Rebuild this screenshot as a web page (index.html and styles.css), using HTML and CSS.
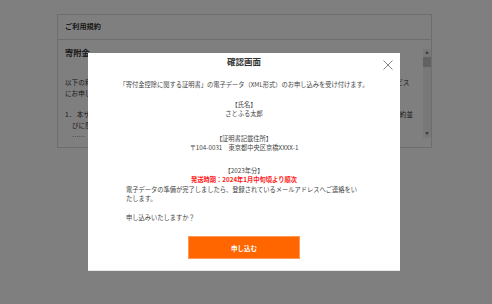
FILE: index.html
```html
<!DOCTYPE html>
<html lang="ja">
<head>
    <meta charset="UTF-8">
    <meta name="viewport" content="width=device-width, initial-scale=1.0">
    <title>確認画面</title>
    <link rel="stylesheet" href="styles.css">
</head>
<body>
    <div class="page">
        <div class="terms">
            <div class="terms-head">ご利用規約</div>
            <div class="terms-body">
                <div class="terms-text">
                    <div class="terms-title">寄附金</div>
                    <p class="terms-lead">以下の利用規約（以下「本規約」といいます。）を必ずよくお読みいただき、その内容にご同意のうえで、本サービス<br>にお申し込みください。</p>
                    <p class="terms-item">1．&nbsp;本サービスは、寄附者が寄附金控除の申告に利用する証明書をインターネット上で電子データで提供し、本規約並<br>びに関連する法令等に従ってご利用いただくものとします。<br>……</p>
                </div>
                <div class="scrollbar">
                    <span class="scroll-arrow">▲</span>
                    <span class="scroll-thumb"></span>
                    <span class="scroll-track"></span>
                    <span class="scroll-arrow">▼</span>
                </div>
            </div>
        </div>
    </div>

    <div class="overlay">
        <div class="modal">
            <div class="modal-head">
                <span></span>
                <div class="modal-title">確認画面</div>
                <button class="close" type="button" aria-label="閉じる">
                    <svg width="10" height="10" viewBox="0 0 10 10">
                        <path d="M0.5 0.5 L9.5 9.5 M9.5 0.5 L0.5 9.5" stroke="#777" stroke-width="0.9" fill="none"/>
                    </svg>
                </button>
            </div>
            <div class="modal-body">
                <div class="lead">「寄付金控除に関する証明書」の電子データ（XML形式）のお申し込みを受け付けます。</div>
                <div class="block block-name">【氏名】<br>さとふる太郎</div>
                <div class="block block-address">【証明書記載住所】<br>〒104-0031　東京都中央区京橋XXXX-1</div>
                <div class="block block-year">
                    【2023年分】<br>
                    <span class="notice">発送時期：2024年1月中旬頃より順次</span>
                    <p class="text">電子データの準備が完了しましたら、登録されているメールアドレスへご連絡をいたします。</p>
                </div>
                <p class="text question">申し込みいたしますか？</p>
                <button class="submit" type="button">申し込む</button>
            </div>
        </div>
    </div>
</body>
</html>
```

FILE: styles.css
```css
body {
    margin: 0;
    background-color: #fff;
    font-family: "Noto Sans CJK JP", "Noto Sans", sans-serif;
    color: #333;
}
.page {
    padding: 14px 0 0 57px;
}
.terms {
    width: 375px;
    height: 134px;
    box-sizing: border-box;
    border: 1px solid #ddd;
    display: flex;
    flex-direction: column;
}
.terms-head {
    height: 24px;
    line-height: 22px;
    padding: 0 7px;
    border-bottom: 1px solid #ddd;
    font-size: 7.2px;
    font-weight: bold;
}
.terms-body {
    flex: 1;
    display: flex;
    overflow: hidden;
}
.terms-text {
    flex: 1;
    min-width: 0;
    overflow: hidden;
    padding: 6px 6px 0 7px;
    font-size: 6.6px;
    line-height: 11px;
}
.terms-title {
    font-size: 8.2px;
    line-height: 12px;
    font-weight: bold;
}
.terms-lead {
    margin: 19px 0 0;
    white-space: nowrap;
}
.terms-item {
    margin: 10px 0 0;
    padding-left: 7px;
    text-indent: -7px;
    white-space: nowrap;
}
.scrollbar {
    width: 8px;
    margin: 9px 0;
    display: flex;
    flex-direction: column;
    background-color: #f0f0f0;
}
.scroll-arrow {
    height: 8px;
    font-size: 3.5px;
    line-height: 8px;
    text-align: center;
    color: #666;
}
.scroll-thumb {
    height: 10px;
    background-color: #c4c4c4;
}
.scroll-track {
    flex: 1;
}

/* 確認モーダル */
.overlay {
    position: fixed;
    inset: 0;
    background-color: rgba(0, 0, 0, 0.5);
    display: flex;
    align-items: flex-start;
    padding: 53px 0 0 88px;
}
.modal {
    width: 312px;
    height: 218px;
    box-sizing: border-box;
    background-color: #fff;
    border-bottom: 1px solid #e6e6e6;
    display: flex;
    flex-direction: column;
}
.modal-head {
    display: grid;
    grid-template-columns: 1fr auto 1fr;
    height: 16px;
}
.modal-title {
    font-size: 8.5px;
    line-height: 16px;
    font-weight: bold;
    color: #333;
}
.close {
    justify-self: end;
    align-self: start;
    margin: 7px 7px 0 0;
    padding: 0;
    width: 10px;
    height: 10px;
    border: none;
    background: none;
    cursor: pointer;
}
.close svg {
    display: block;
}
.modal-body {
    display: flex;
    flex-direction: column;
    align-items: center;
    padding: 0 24px;
    font-size: 6.25px;
    line-height: 9.5px;
    color: #444;
}
.lead {
    margin-top: 11px;
    text-align: center;
    white-space: nowrap;
}
.block {
    align-self: stretch;
    text-align: center;
}
.block-name {
    margin-top: 10px;
}
.block-address {
    margin-top: 15px;
}
.block-year {
    margin-top: 13px;
}
.notice {
    color: #ff1a1a;
    font-weight: bold;
}
.text {
    align-self: stretch;
    margin: 0;
    padding: 0 14px;
    text-align: left;
}
.question {
    margin-top: 9px;
}
.submit {
    margin-top: 14px;
    width: 112px;
    height: 23px;
    border: 1px solid #ff9a55;
    background-color: #ff6600;
    color: #fff;
    font-family: inherit;
    font-size: 6.5px;
    font-weight: bold;
    cursor: pointer;
}
```
